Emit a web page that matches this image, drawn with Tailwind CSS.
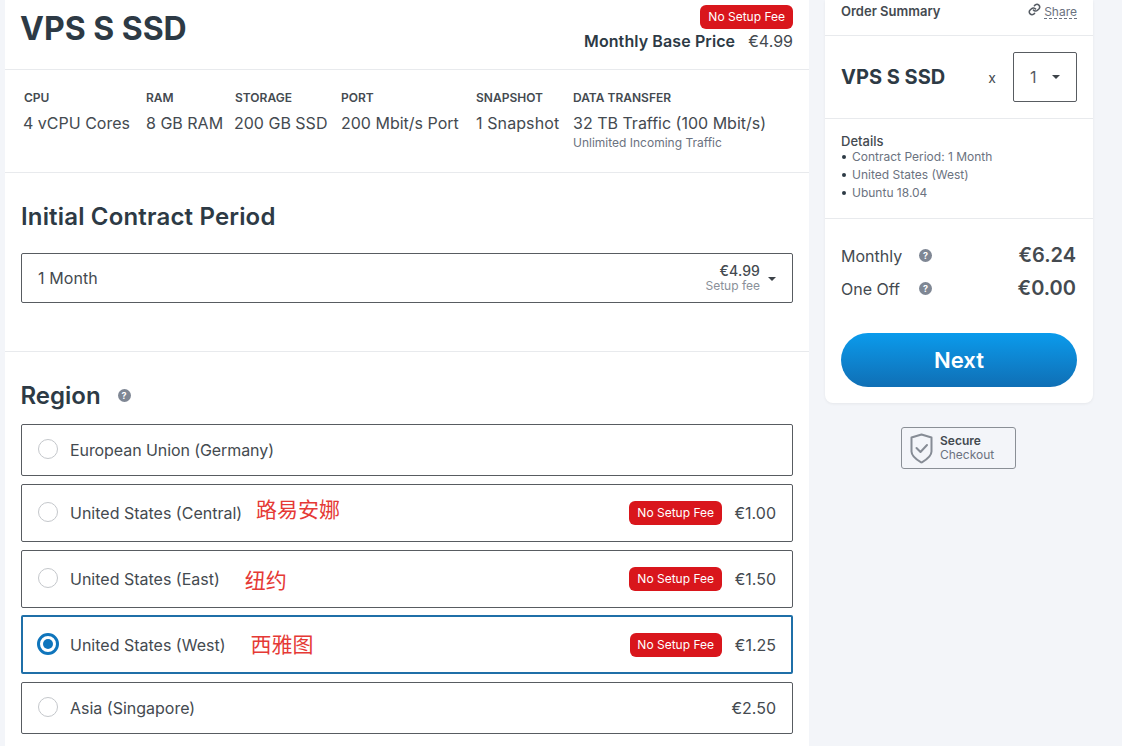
<!DOCTYPE html>
<html lang="en">
<head>
  <meta charset="UTF-8" />
  <title>VPS S SSD - Order</title>
  <script src="https://cdn.jsdelivr.net/npm/@tailwindcss/browser@4"></script>
</head>
<body class="bg-[#f3f5f9] text-[#444a50] font-['Inter','Noto_Sans_CJK_SC',sans-serif] h-[746px] w-[1122px] overflow-hidden">
  <div class="flex items-start pl-[5px] gap-4">

    <!-- main column -->
    <main class="w-[804px] h-[746px] bg-white">
      <header class="h-[70px] border-b border-[#e8eaed] flex justify-between pl-[15px] pr-4">
        <h1 class="text-[32px] leading-none font-bold text-[#2d3a45] mt-[13px]">VPS S SSD</h1>
        <div class="flex flex-col items-end pt-[5px]">
          <span class="h-6 leading-6 px-2 rounded-md bg-[#d9161c] text-white text-xs">No Setup Fee</span>
          <div class="text-base leading-5 mt-[2px]"><b class="font-semibold text-[#2d3a45] tracking-[0.1px]">Monthly Base Price</b><span class="ml-[13px]">€4.99</span></div>
        </div>
      </header>

      <section class="h-[103px] border-b border-[#e8eaed] flex pl-[19px] pt-5 text-base leading-5">
        <div class="w-[122px]"><h3 class="text-xs leading-4 font-semibold">CPU</h3><p class="mt-[7px] -ml-px">4 vCPU Cores</p></div>
        <div class="w-[89px]"><h3 class="text-xs leading-4 font-semibold">RAM</h3><p class="mt-[7px]">8 GB RAM</p></div>
        <div class="w-[106px]"><h3 class="text-xs leading-4 font-semibold">STORAGE</h3><p class="mt-[7px] -ml-px">200 GB SSD</p></div>
        <div class="w-[135px]"><h3 class="text-xs leading-4 font-semibold">PORT</h3><p class="mt-[7px]">200 Mbit/s Port</p></div>
        <div class="w-[97px]"><h3 class="text-xs leading-4 font-semibold">SNAPSHOT</h3><p class="mt-[7px] tracking-[0.1px]">1 Snapshot</p></div>
        <div><h3 class="text-xs leading-4 font-semibold">DATA TRANSFER</h3><p class="mt-[7px]">32 TB Traffic (100 Mbit/s)</p><p class="text-xs leading-4 mt-[2px] text-[#6b7280]">Unlimited Incoming Traffic</p></div>
      </section>

      <section class="h-[179px] border-b border-[#e8eaed] px-4 pt-[29px]">
        <h2 class="text-2xl leading-[30px] font-semibold text-[#2d3a45] tracking-[0.17px]">Initial Contract Period</h2>
        <div class="mt-[21px] h-[50px] border border-[#585c61] rounded-[2px] flex items-center justify-between pl-4 pr-4">
          <span class="text-base tracking-[0.1px]">1 Month</span>
          <div class="flex items-center gap-[8px]">
            <div class="text-right">
              <div class="text-sm leading-[15px] font-medium tracking-[0.1px]">€4.99</div>
              <div class="text-xs leading-[15px] text-[#8a9099]">Setup fee</div>
            </div>
            <span class="w-0 h-0 border-x-[4px] border-x-transparent border-t-[4px] border-t-[#3c4248] mt-[1px]"></span>
          </div>
        </div>
      </section>

      <section class="px-4 pt-[28px]">
        <div class="flex items-center h-[32px] gap-[17px]">
          <h2 class="text-2xl font-semibold text-[#2d3a45] -ml-[0.5px]">Region</h2>
          <span class="w-[13px] h-[13px] rounded-full bg-[#7f8794] text-white text-[9px] leading-[13px] font-bold text-center -mt-[2px]">?</span>
        </div>
        <div class="mt-[12px] flex flex-col gap-2">
          <label class="h-[52px] border border-[#585c61] rounded-[2px] flex items-center pl-4 pr-4 text-base">
            <span class="w-5 h-5 rounded-full border border-[#c4c7cb] mr-[12px] -mt-[2px]"></span><span class="tracking-[-0.08px]">European Union (Germany)</span>
          </label>
          <label class="h-[58px] border border-[#585c61] rounded-[2px] flex items-center pl-4 pr-4 text-base">
            <span class="w-5 h-5 rounded-full border border-[#c4c7cb] mr-[12px] -mt-[3px]"></span>United States (Central)
            <span class="ml-[14px] -mt-[6px] text-[21px] leading-7 text-[#e53935]">路易安娜</span>
            <span class="ml-auto h-6 leading-6 px-2 rounded-md bg-[#d9161c] text-white text-xs">No Setup Fee</span><span class="w-[54px] text-right">€1.00</span>
          </label>
          <label class="h-[58px] border border-[#585c61] rounded-[2px] flex items-center pl-4 pr-4 text-base">
            <span class="w-5 h-5 rounded-full border border-[#c4c7cb] mr-[12px] -mt-[3px]"></span>United States (East)
            <span class="ml-[25px] mt-[3px] text-[21px] leading-7 text-[#e53935]">纽约</span>
            <span class="ml-auto h-6 leading-6 px-2 rounded-md bg-[#d9161c] text-white text-xs">No Setup Fee</span><span class="w-[54px] text-right">€1.50</span>
          </label>
          <label class="h-[59px] border-2 border-[#1f6fa8] rounded-[2px] flex items-center pl-[14px] pr-[15px] text-base -mt-[1px]">
            <span class="w-[22px] h-[22px] rounded-full border-[3px] border-[#0f75bc] p-[3px] mr-[11px] -mt-[1px]"><span class="block w-full h-full rounded-full bg-[#0f75bc]"></span></span>United States (West)
            <span class="ml-[25px] text-[21px] leading-7 text-[#e53935]">西雅图</span>
            <span class="ml-auto h-6 leading-6 pl-[7px] pr-2 rounded-md bg-[#d9161c] text-white text-xs">No Setup Fee</span><span class="w-[54px] text-right">€1.25</span>
          </label>
          <label class="h-[52px] border border-[#585c61] rounded-[2px] flex items-center justify-between pl-4 pr-4 text-base">
            <span class="flex items-center"><span class="w-5 h-5 rounded-full border border-[#c4c7cb] mr-[12px] -mt-[2px]"></span>Asia (Singapore)</span>
            <span>€2.50</span>
          </label>
        </div>
      </section>
    </main>

    <!-- order summary -->
    <aside class="w-[268px]">
      <div class="bg-white rounded-b-lg shadow-[0_1px_3px_rgba(0,0,0,0.06)]">
        <div class="h-[36px] border-b border-[#e8eaed] flex justify-between px-4 pt-[3px]">
          <h3 class="text-[13px] leading-4 font-semibold">Order Summary</h3>
          <a class="flex items-start text-xs leading-4 text-[#6b7280]">
            <svg class="w-[13px] h-[13px] mr-[3px] text-[#555b63]" viewBox="0 0 24 24" fill="none" stroke="currentColor" stroke-width="2.8" stroke-linecap="round" stroke-linejoin="round"><path d="M10 13a5 5 0 0 0 7.500.5l3-3a5 5 0 0 0-7-7l-1.700 1.700"/><path d="M14 11a5 5 0 0 0-7.500-.5l-3 3a5 5 0 0 0 7 7l1.700-1.700"/></svg>
            <span class="mt-[2px] border-b border-dashed border-[#6b7280] leading-[13px]">Share</span>
          </a>
        </div>
        <div class="h-[83px] border-b border-[#e8eaed] flex items-center pl-4 pr-4">
          <h2 class="text-xl font-bold text-[#2d3a45]">VPS S SSD</h2>
          <span class="ml-auto mr-[17px] text-sm mt-[2px]">x</span>
          <div class="w-16 h-[50px] border border-[#585c61] rounded-[2px] flex items-center pl-4 text-base text-[#555b63]">
            1<span class="ml-[15px] w-0 h-0 border-x-[4px] border-x-transparent border-t-[4px] border-t-[#3c4248]"></span>
          </div>
        </div>
        <div class="h-[100px] border-b border-[#e8eaed] pl-4 pt-[15px]">
          <h4 class="text-[13px] leading-[14px] font-medium">Details</h4>
          <ul class="text-xs text-[#6b7280]">
            <li class="h-[18px] leading-[16px] flex items-center"><span class="w-1 h-1 rounded-full bg-[#2d3a45] mr-[6px] ml-[1px]"></span>Contract Period: 1 Month</li>
            <li class="h-[18px] leading-[16px] flex items-center"><span class="w-1 h-1 rounded-full bg-[#2d3a45] mr-[6px] ml-[1px]"></span>United States (West)</li>
            <li class="h-[18px] leading-[16px] flex items-center"><span class="w-1 h-1 rounded-full bg-[#2d3a45] mr-[6px] ml-[1px]"></span>Ubuntu 18.04</li>
          </ul>
        </div>
        <div class="px-4 pt-[20px] pb-4">
          <div class="flex items-center h-[33px]">
            <span class="text-base w-[78px]">Monthly</span>
            <span class="w-[13px] h-[13px] rounded-full bg-[#7f8794] text-white text-[9px] leading-[13px] font-bold text-center -mt-[1px]">?</span>
            <b class="ml-auto mr-[1px] -mt-[2px] text-xl font-semibold">€6.24</b>
          </div>
          <div class="flex items-center h-[33px]">
            <span class="text-base w-[78px]">One Off</span>
            <span class="w-[13px] h-[13px] rounded-full bg-[#7f8794] text-white text-[9px] leading-[13px] font-bold text-center -mt-[1px]">?</span>
            <b class="ml-auto mr-[1px] -mt-[2px] text-xl font-semibold">€0.00</b>
          </div>
          <button class="mt-[28px] w-full h-[54px] rounded-full bg-gradient-to-b from-[#0a9bec] to-[#0f6fb5] text-white text-[22px] font-semibold">Next</button>
        </div>
      </div>
      <div class="mt-6 ml-[76px] w-[115px] h-[42px] border border-[#8a8f96] rounded-[3px] flex items-center pl-2 gap-[7px]">
        <svg class="w-[23px] h-[31px] text-[#868c95]" viewBox="0 0 23 31" fill="none" stroke="currentColor" stroke-width="2" stroke-linejoin="round" stroke-linecap="round"><path d="M11.500 1.500 L21.500 4.500 V18.500 C21.500 24 15 27.500 11.500 29.500 C8 27.500 1.500 24 1.500 18.500 V4.500 Z"/><path d="M6.500 15 L10.500 19 L17 12"/></svg>
        <div class="text-xs leading-[14px]"><div class="font-semibold">Secure</div><div class="text-[#6b7280]">Checkout</div></div>
      </div>
    </aside>
  </div>
</body>
</html>
